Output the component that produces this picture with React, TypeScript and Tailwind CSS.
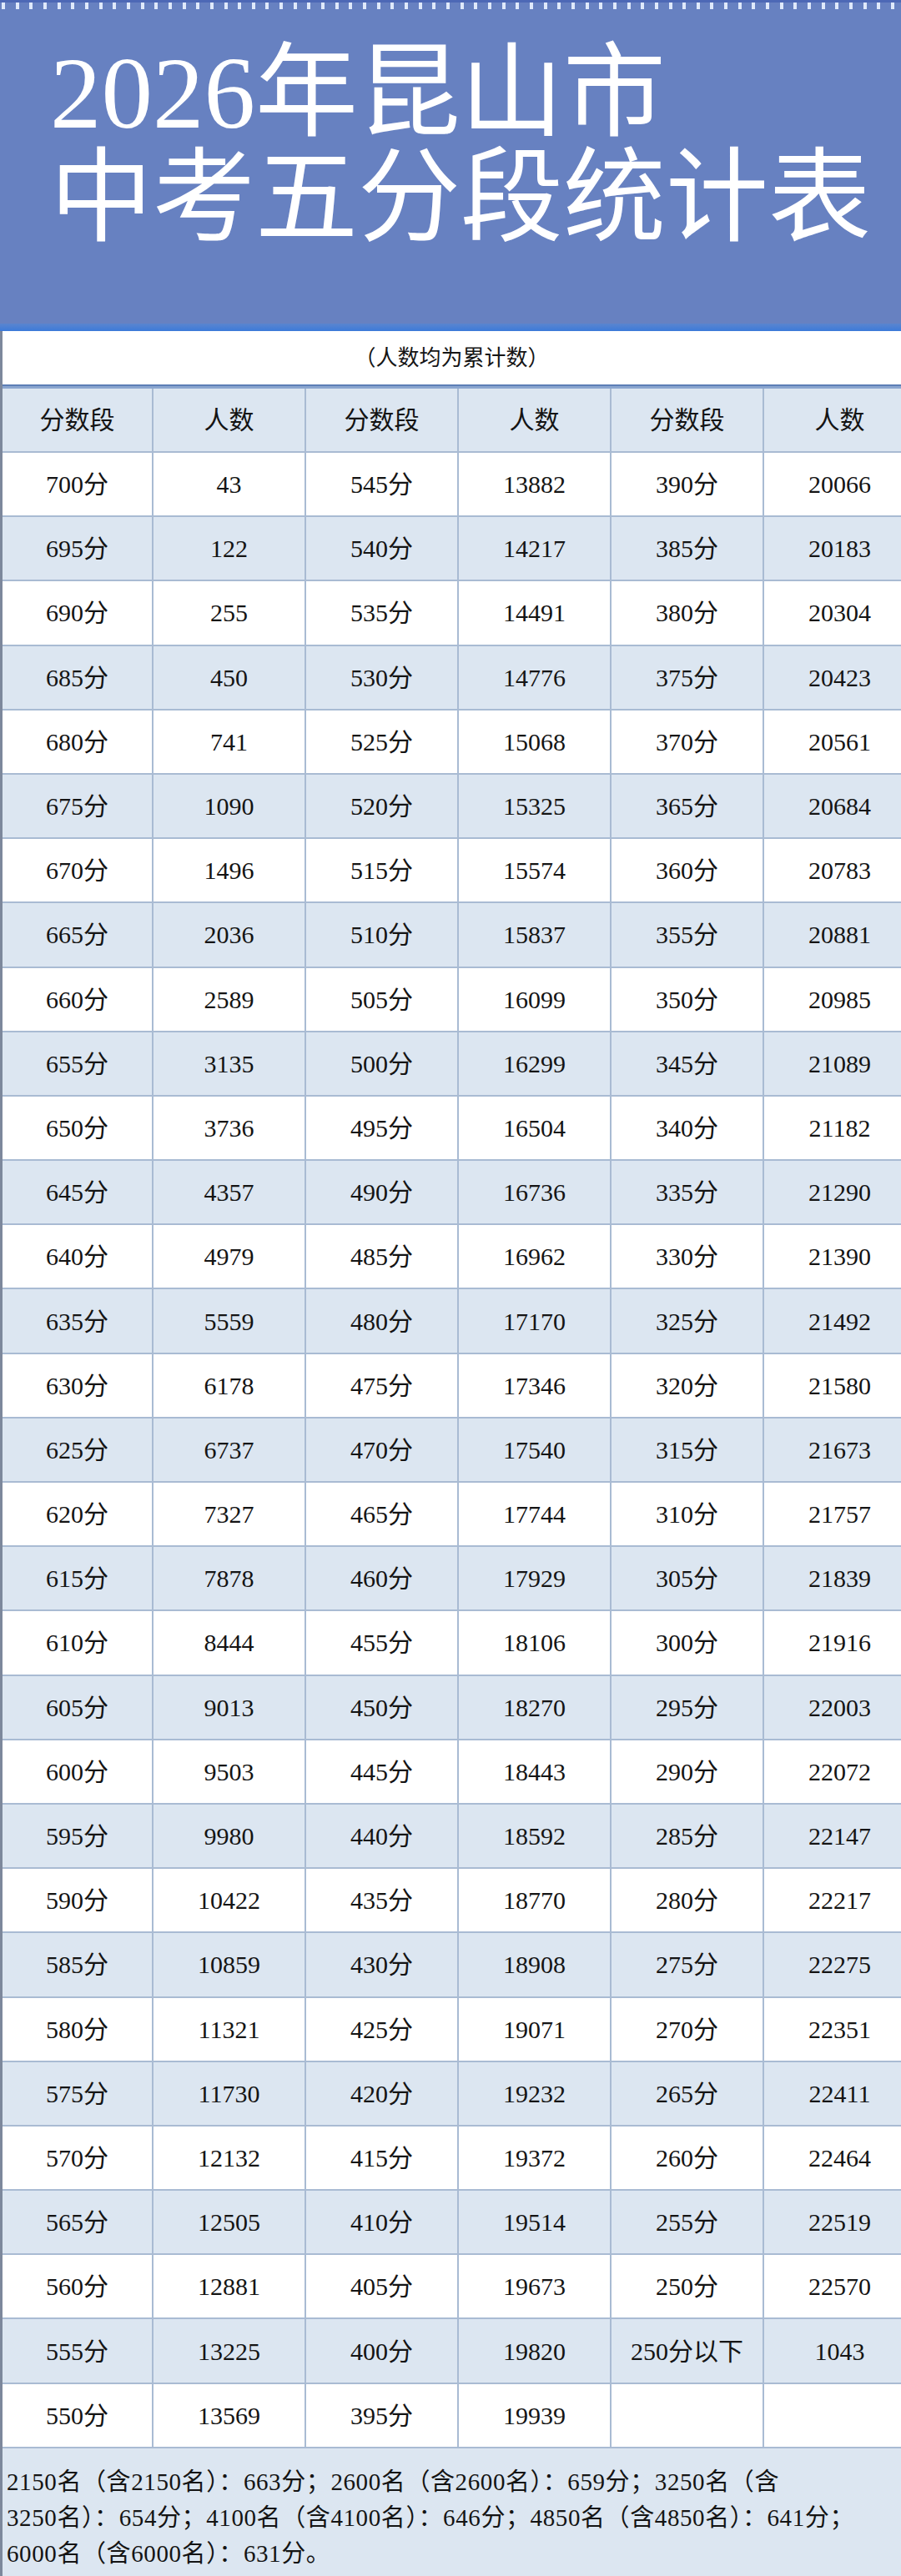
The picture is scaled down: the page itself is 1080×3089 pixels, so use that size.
import React from "react";

const scores1 = Array.from({ length: 31 }, (_, i) => 700 - i * 5);
const counts1 = [43,122,255,450,741,1090,1496,2036,2589,3135,3736,4357,4979,5559,6178,6737,7327,7878,8444,9013,9503,9980,10422,10859,11321,11730,12132,12505,12881,13225,13569];
const scores2 = Array.from({ length: 31 }, (_, i) => 545 - i * 5);
const counts2 = [13882,14217,14491,14776,15068,15325,15574,15837,16099,16299,16504,16736,16962,17170,17346,17540,17744,17929,18106,18270,18443,18592,18770,18908,19071,19232,19372,19514,19673,19820,19939];
const scores3 = Array.from({ length: 29 }, (_, i) => 390 - i * 5);
const counts3 = [20066,20183,20304,20423,20561,20684,20783,20881,20985,21089,21182,21290,21390,21492,21580,21673,21757,21839,21916,22003,22072,22147,22217,22275,22351,22411,22464,22519,22570];

const font = { fontFamily: '"Liberation Serif", "Noto Sans CJK SC", serif' };

function Cell({ children }: { children?: React.ReactNode }) {
  return (
    <div className="flex items-center justify-center border-r-2 border-[#a9bbd3] text-[30px] text-[#141414]">
      {children}
    </div>
  );
}

export default function App() {
  const rows = scores1.map((s, i) => {
    const c5 = i < 29 ? `${scores3[i]}分` : i === 29 ? "250分以下" : "";
    const c6 = i < 29 ? String(counts3[i]) : i === 29 ? "1043" : "";
    return [`${s}分`, String(counts1[i]), `${scores2[i]}分`, String(counts2[i]), c5, c6];
  });

  return (
    <div className="w-[1080px] overflow-hidden bg-white" style={font}>
      {/* Header banner */}
      <div className="bg-[#6781c1]">
        <div className="h-[3px] bg-[#4d68b6]" />
        <div className="flex h-[8px] gap-[12.67px] pl-[2px]">
          {Array.from({ length: 65 }, (_, i) => (
            <span key={i} className="block h-[8px] w-[4px] shrink-0 bg-[#dfe9fb]" />
          ))}
        </div>
        <div className="h-[377px] pl-[60px] pt-[38px] text-[123px] leading-[126px] text-white">
          <div className="whitespace-nowrap">2026年昆山市</div>
          <div className="whitespace-nowrap">中考五分段统计表</div>
        </div>
        <div className="h-[9px] bg-gradient-to-b from-[#5a85cf] to-[#3c7ad9]" />
      </div>

      {/* Table */}
      <div className="border-l-[3px] border-[#7d889c]">
        <div className="flex h-[64px] items-center justify-center text-[26px] text-[#151515]">
          （人数均为累计数）
        </div>
        <div className="h-[2px] bg-[#5d7fb6]" />
        <div className="h-[3px] bg-[#8aa6cf]" />
        <div className="w-[1100px]">
          <div className="grid h-[77px] grid-cols-[181px_183px_183px_183px_183px_183px] border-b-2 border-[#a9bbd3] bg-[#dce6f1]">
            {["分数段", "人数", "分数段", "人数", "分数段", "人数"].map((h, i) => (
              <Cell key={i}>{h}</Cell>
            ))}
          </div>
          {rows.map((r, i) => (
            <div
              key={i}
              className={`grid h-[77.2px] grid-cols-[181px_183px_183px_183px_183px_183px] border-b-2 border-[#a9bbd3] ${
                i % 2 === 1 ? "bg-[#dce6f1]" : "bg-white"
              }`}
            >
              {r.map((v, j) => (
                <Cell key={j}>{v}</Cell>
              ))}
            </div>
          ))}
        </div>
        <div className="h-[160px] bg-[#dce6f1] pl-[5px] pt-[19px] text-[29px] leading-[43px] tracking-[0.6px] text-[#141414]">
          <div className="whitespace-nowrap">2150名（含2150名）：663分；2600名（含2600名）：659分；3250名（含</div>
          <div className="whitespace-nowrap">3250名）：654分；4100名（含4100名）：646分；4850名（含4850名）：641分；</div>
          <div className="whitespace-nowrap">6000名（含6000名）：631分。</div>
        </div>
      </div>
    </div>
  );
}
